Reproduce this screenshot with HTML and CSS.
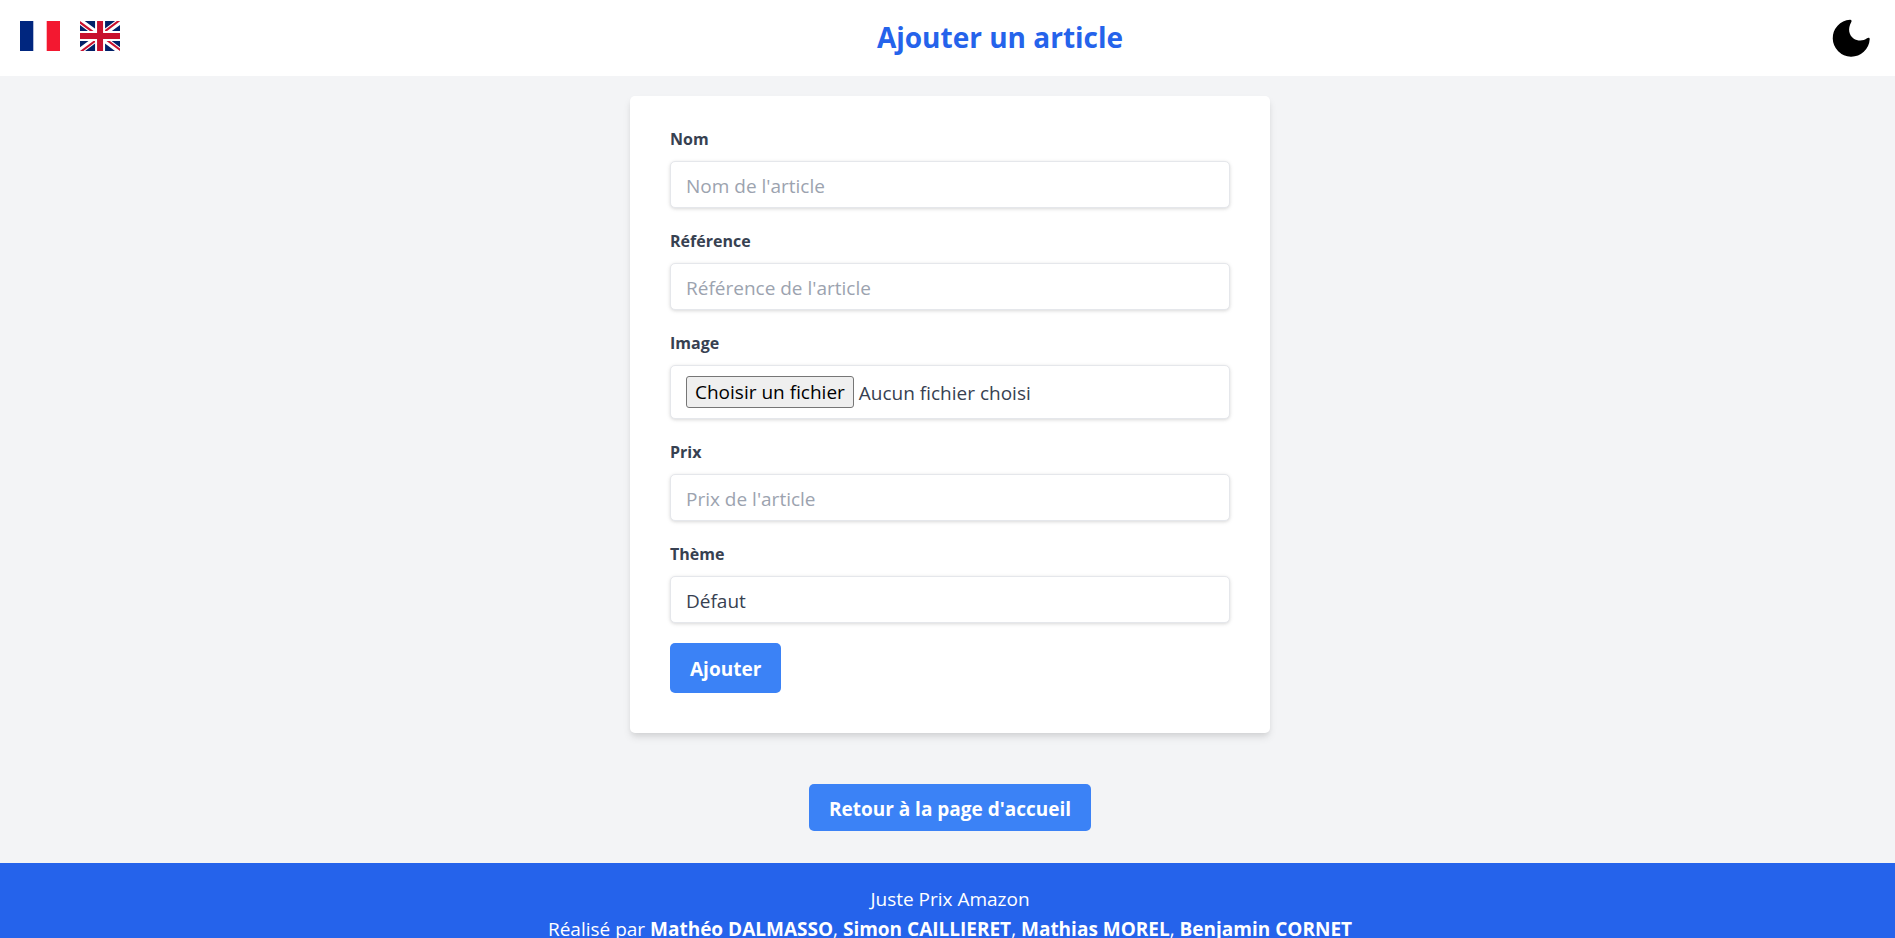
FILE: index.html
```html
<!DOCTYPE html>
<html lang="fr">
<head>
<meta charset="utf-8">
<title>Ajouter un article</title>
<link rel="stylesheet" href="styles.css">
</head>
<body>
<div class="page">
  <header class="header">
    <nav class="languages" aria-label="Langue">
      <a class="flag" href="#fr" aria-label="Français">
        <svg viewBox="0 0 40 30" width="40" height="30" aria-hidden="true">
          <path fill="#fff" d="M0 0h40v30H0z"/>
          <path fill="#00267f" d="M0 0h13.3v30H0z"/>
          <path fill="#f31830" d="M26.7 0H40v30H26.7z"/>
        </svg>
      </a>
      <a class="flag" href="#en" aria-label="English">
        <svg viewBox="0 0 640 480" width="40" height="30" aria-hidden="true">
          <path fill="#012169" d="M0 0h640v480H0z"/>
          <path fill="#fff" d="m75 0 244 181L562 0h78v62L400 241l240 178v61h-80L320 301 81 480H0v-60l239-178L0 64V0z"/>
          <path fill="#c8102e" d="m424 281 216 159v40L369 281zm-184 20 6 35L54 480H0zM640 0v3L391 191l2-44L590 0zM0 0l239 176h-60L0 42z"/>
          <path fill="#fff" d="M241 0v480h160V0zM0 160v160h640V160z"/>
          <path fill="#c8102e" d="M0 193v96h640v-96zM273 0v480h96V0z"/>
        </svg>
      </a>
    </nav>
    <h1 class="title">Ajouter un article</h1>
    <button class="theme-toggle" type="button" aria-label="Mode sombre">
      <svg viewBox="0 0 42 42" width="42" height="42" aria-hidden="true">
        <path d="M20 1.7C21.4 1.5 22 2.8 21.3 4 17.5 11 19 17 23.5 20.5 28 23.5 33.5 23 37 20.3 38.6 19.2 40 19.8 39.7 21.3A18.5 18.5 0 1 1 20 1.7z"/>
      </svg>
    </button>
  </header>

  <main class="main">
    <form class="card">
      <div class="field">
        <label class="label" for="nom">Nom</label>
        <input class="input" id="nom" type="text" placeholder="Nom de l'article">
      </div>
      <div class="field">
        <label class="label" for="reference">Référence</label>
        <input class="input" id="reference" type="text" placeholder="Référence de l'article">
      </div>
      <div class="field">
        <label class="label" for="image">Image</label>
        <div class="input file">
          <input class="file-native" id="image" type="file" accept="image/*">
          <span class="file-button">Choisir un fichier</span>
          <span class="file-name">Aucun fichier choisi</span>
        </div>
      </div>
      <div class="field">
        <label class="label" for="prix">Prix</label>
        <input class="input" id="prix" type="text" placeholder="Prix de l'article">
      </div>
      <div class="field">
        <label class="label" for="theme">Thème</label>
        <select class="input" id="theme">
          <option>Défaut</option>
        </select>
      </div>
      <button class="button button-submit" type="submit">Ajouter</button>
    </form>
    <a class="button" href="#accueil">Retour à la page d'accueil</a>
  </main>

  <footer class="footer">
    <p>Juste Prix Amazon</p>
    <p>Réalisé par <a href="#dalmasso">Mathéo DALMASSO</a>, <a href="#caillieret">Simon CAILLIERET</a>, <a href="#morel">Mathias MOREL</a>, <a href="#cornet">Benjamin CORNET</a></p>
  </footer>
</div>
</body>
</html>
```
FILE: styles.css
```css
* {
  box-sizing: border-box;
}

body {
  margin: 0;
  font-family: "Segoe UI", "Open Sans", "Noto Sans", sans-serif;
  font-size: 19px;
  line-height: 30px;
  color: #374151;
}

.page {
  display: flex;
  flex-direction: column;
  height: 100vh;
  overflow-y: auto;
  scrollbar-width: none;
  background: #f3f4f6;
}

.header {
  display: flex;
  flex-shrink: 0;
  align-items: center;
  justify-content: space-between;
  height: 76px;
  padding: 0 23px 0 20px;
  background: #fff;
}

.languages {
  display: flex;
  gap: 20px;
  width: 150px;
  padding-bottom: 4px;
}

.flag,
.flag svg {
  display: block;
}

.title {
  margin: 0;
  padding-bottom: 2px;
  font-size: 28px;
  line-height: 36px;
  font-weight: 700;
  color: #2563eb;
}

.theme-toggle {
  display: block;
  padding: 2px 0 0;
  border: 0;
  background: none;
  cursor: pointer;
}

.theme-toggle svg {
  display: block;
}

.main {
  display: flex;
  flex: 1 0 auto;
  flex-direction: column;
  align-items: center;
  gap: 51px;
  padding: 20px 20px 32px 25px;
}

.card {
  width: 100%;
  max-width: 640px;
  padding: 31px 40px 40px;
  border-radius: 5px;
  background: #fff;
  box-shadow: 0 5px 8px -1px rgba(0, 0, 0, .1), 0 3px 5px -1px rgba(0, 0, 0, .06);
}

.field {
  margin-bottom: 21px;
}

.field:nth-of-type(5) {
  margin-bottom: 20px;
}

.label {
  display: block;
  margin-bottom: 9px;
  font-size: 16px;
  line-height: 25px;
  font-weight: 700;
}

.input {
  display: block;
  width: 100%;
  height: 47px;
  margin: 0;
  padding: 2px 15px 0;
  border: 1px solid #e5e7eb;
  border-radius: 5px;
  background: #fff;
  box-shadow: 0 1px 4px rgba(0, 0, 0, .1), 0 1px 3px rgba(0, 0, 0, .06);
  font: inherit;
  color: #374151;
  appearance: none;
}

.input::placeholder {
  color: #9ca3af;
  opacity: 1;
}

.file {
  position: relative;
  display: flex;
  align-items: center;
  gap: 5px;
  height: 54px;
  padding-top: 0;
}

.file-native {
  position: absolute;
  inset: 0;
  width: 100%;
  opacity: 0;
  cursor: pointer;
}

.file-button {
  padding: 1px 8px 0;
  border: 1px solid #767676;
  border-radius: 3px;
  background: #efefef;
  line-height: 29px;
  color: #000;
}

.file-name {
  padding-top: 1px;
}

.button {
  display: block;
  padding: 10px 20px 7px;
  border: 0;
  border-radius: 5px;
  background: #3b82f6;
  font: inherit;
  font-weight: 700;
  color: #fff;
  text-decoration: none;
  cursor: pointer;
}

.button-submit {
  padding: 11px 20px 9px;
}

.footer {
  flex-shrink: 0;
  padding: 21px 20px 20px 25px;
  background: #2563eb;
  text-align: center;
  color: #fff;
}

.footer p {
  margin: 0;
}

.footer a {
  font-weight: 700;
  color: inherit;
  text-decoration: none;
}
```
